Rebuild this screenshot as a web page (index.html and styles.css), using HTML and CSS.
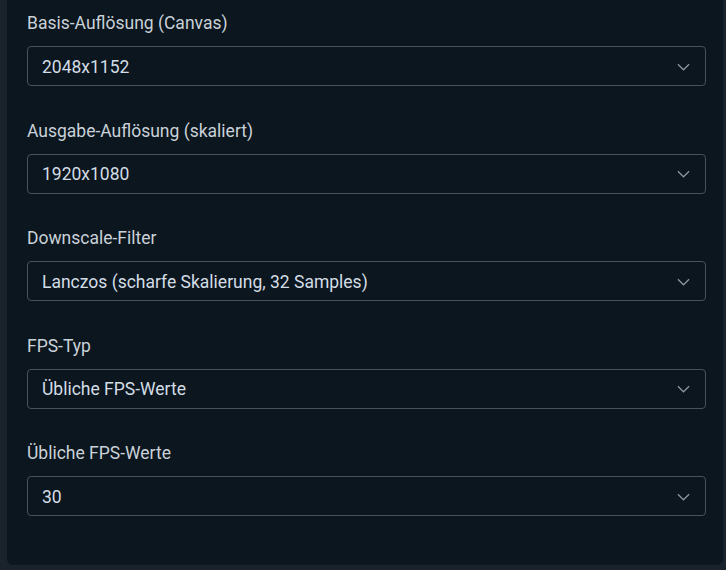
FILE: index.html
```html
<!DOCTYPE html>
<html lang="de">
<head>
<meta charset="utf-8">
<title>Video</title>
<link rel="stylesheet" href="styles.css">
</head>
<body>
<div class="panel">
  <div class="field">
    <div class="label">Basis-Auflösung (Canvas)</div>
    <div class="select"><span>2048x1152</span><svg class="chev" viewBox="0 0 14 8"><path d="M1 1l6 6 6-6"/></svg></div>
  </div>
  <div class="field">
    <div class="label">Ausgabe-Auflösung (skaliert)</div>
    <div class="select"><span>1920x1080</span><svg class="chev" viewBox="0 0 14 8"><path d="M1 1l6 6 6-6"/></svg></div>
  </div>
  <div class="field">
    <div class="label">Downscale-Filter</div>
    <div class="select"><span>Lanczos (scharfe Skalierung, 32 Samples)</span><svg class="chev" viewBox="0 0 14 8"><path d="M1 1l6 6 6-6"/></svg></div>
  </div>
  <div class="field">
    <div class="label">FPS-Typ</div>
    <div class="select"><span>Übliche FPS-Werte</span><svg class="chev" viewBox="0 0 14 8"><path d="M1 1l6 6 6-6"/></svg></div>
  </div>
  <div class="field">
    <div class="label">Übliche FPS-Werte</div>
    <div class="select"><span>30</span><svg class="chev" viewBox="0 0 14 8"><path d="M1 1l6 6 6-6"/></svg></div>
  </div>
</div>
</body>
</html>
```
FILE: styles.css
```css
html, body {
  margin: 0;
  padding: 0;
  background: #1a232b;
  height: 570px;
  overflow: hidden;
}
body {
  font-family: Roboto, "Liberation Sans", sans-serif;
}
.panel {
  margin-left: 7px;
  margin-right: 3px;
  height: 565px;
  box-sizing: border-box;
  background: #0b161e;
  border-radius: 0 0 6px 6px;
  padding: 11px 17px 0 20px;
}
.field {
  margin-bottom: 32.5px;
}
.label {
  font-size: 17.5px;
  line-height: 24px;
  color: #c9d1d9;
  margin-bottom: 11px;
}
.select {
  height: 40px;
  box-sizing: border-box;
  border: 1px solid #48525b;
  border-radius: 4px;
  display: flex;
  align-items: center;
  justify-content: space-between;
  padding: 1px 15px 0 14px;
  font-size: 17.5px;
  color: #d3dde6;
}
.chev {
  width: 13px;
  height: 8px;
  fill: none;
  stroke: #8f979f;
  stroke-width: 1.3;
}
```
